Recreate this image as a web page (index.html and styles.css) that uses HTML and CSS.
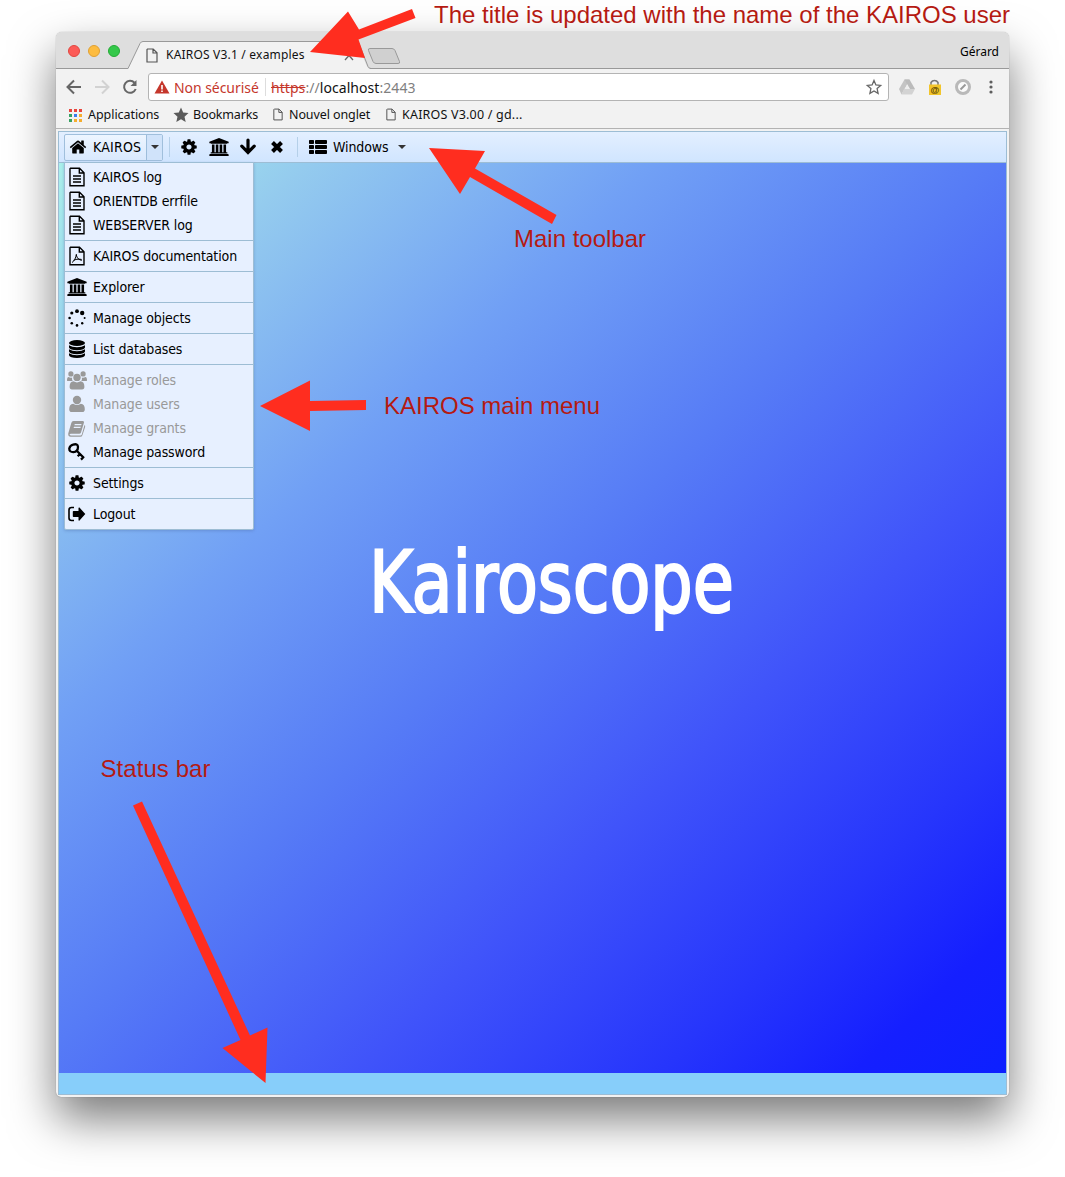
FILE: index.html
```html
<!DOCTYPE html>
<html lang="en">
<head>
<meta charset="utf-8">
<title>KAIROS V3.1 / examples</title>
<link rel="stylesheet" href="styles.css">
</head>
<body>
<svg class="defs" width="0" height="0">
  <defs>
    <symbol id="home" viewBox="0 0 1792 1792"><path d="M1472 992v480q0 26-19 45t-45 19h-384v-384h-256v384h-384q-26 0-45-19t-19-45v-480q0-1 .5-3t.5-3l575-474 575 474q1 2 1 6zm223-69l-62 74q-8 9-21 11h-3q-13 0-21-7l-692-577-692 577q-12 8-24 7-13-2-21-11l-62-74q-8-10-7-23.5t11-21.5l719-599q32-26 76-26t76 26l244 204v-195q0-14 9-23t23-9h192q14 0 23 9t9 23v408l219 182q10 8 11 21.5t-7 23.5z"/></symbol>
    <symbol id="cog" viewBox="0 0 1792 1792"><path d="M1152 896q0-106-75-181t-181-75-181 75-75 181 75 181 181 75 181-75 75-181zm512-109v222q0 12-8 23t-20 13l-185 28q-19 54-39 91 35 50 107 138 10 12 10 25t-9 23q-27 37-99 108t-94 71q-12 0-26-9l-138-108q-44 23-91 38-16 136-29 186-7 28-36 28h-222q-14 0-24.500-8.500t-11.500-21.500l-28-184q-49-16-90-37l-141 107q-10 9-25 9-14 0-25-11-126-114-165-168-7-10-7-23 0-12 8-23 15-21 51-66.500t54-70.500q-27-50-41-99l-183-27q-13-2-21-12.500t-8-23.500v-222q0-12 8-23t19-13l186-28q14-46 39-92-40-57-107-138-10-12-10-24 0-10 9-23 26-36 98.500-107.500t94.500-71.500q13 0 26 10l138 107q44-23 91-38 16-136 29-186 7-28 36-28h222q14 0 24.500 8.500t11.500 21.500l28 184q49 16 90 37l142-107q9-9 24-9 13 0 25 10 129 119 165 170 7 8 7 22 0 12-8 23-15 21-51 66.500t-54 70.500q26 50 41 98l183 28q13 2 21 12.500t8 23.500z"/></symbol>
    <symbol id="bank" viewBox="0 0 1920 1792"><path d="M960 0l960 384v128h-128q0 26-20.500 45t-48.500 19h-1526q-28 0-48.500-19t-20.500-45h-128v-128zm-704 640h256v768h128v-768h256v768h128v-768h256v768h128v-768h256v768h59q28 0 48.500 19t20.500 45v64h-1664v-64q0-26 20.500-45t48.500-19h59v-768zm1595 960q28 0 48.500 19t20.500 45v128h-1920v-128q0-26 20.500-45t48.500-19h1782z"/></symbol>
    <symbol id="down" viewBox="0 0 18 18"><path d="M9 2v12M2.800 8.200L9 14.400l6.200-6.200" fill="none" stroke="currentColor" stroke-width="3.200" stroke-linecap="round"/></symbol>
    <symbol id="times" viewBox="0 0 18 18"><path d="M4.500 4.500l9 9M13.500 4.500l-9 9" fill="none" stroke="currentColor" stroke-width="4"/></symbol>
    <symbol id="list" viewBox="0 0 18 14"><path d="M.8 0h3.400q.8 0 .8.800v2.400q0 .8-.8.800H.8Q0 4 0 3.200V.8Q0 0 .8 0zM7 0h10q1 0 1 .8v2.400q0 .8-1 .8H7q-1 0-1-.8V.8Q6 0 7 0zM.8 5h3.400q.8 0 .8.800v2.400q0 .8-.8.800H.8Q0 9 0 8.200V5.800Q0 5 .8 5zM7 5h10q1 0 1 .8v2.400q0 .8-1 .8H7q-1 0-1-.8V5.800Q6 5 7 5zM.8 10h3.400q.8 0 .8.800v2.400q0 .8-.8.800H.8q-.8 0-.8-.8v-2.400q0-.8.8-.8zM7 10h10q1 0 1 .8v2.400q0 .8-1 .8H7q-1 0-1-.8v-2.400q0-.8 1-.8z"/></symbol>
    <symbol id="doc" viewBox="0 0 18 20"><path d="M2.500 1.200h9L16 5.700v13H2V1.700zM11.300 1.500V6H16M5 9h8M5 12h8M5 15h8" fill="none" stroke="currentColor" stroke-width="1.400"/></symbol>
    <symbol id="pdf" viewBox="0 0 18 20"><path d="M2.500 1.200h9L16 5.700v13H2V1.700zM11.300 1.500V6H16" fill="none" stroke="currentColor" stroke-width="1.400"/><path d="M4 16.500c2-1 4-4.500 4.400-8.500M8.300 9c.7 3.200 3 5.400 5.700 5.200M5.500 14.300c2-.9 4.500-1.500 8-.9" fill="none" stroke="currentColor" stroke-width="1"/></symbol>
    <symbol id="dots" viewBox="0 0 18 18"><circle cx="9" cy="2.200" r="1.900"/><circle cx="14.200" cy="4" r="2.200"/><circle cx="3.800" cy="4" r="1.600"/><circle cx="1.600" cy="9" r="1.300"/><circle cx="16.600" cy="9" r="1"/><circle cx="3.800" cy="14.200" r="1.300"/><circle cx="9" cy="16.400" r="1.300"/><circle cx="14.200" cy="14.200" r="1.200"/></symbol>
    <symbol id="db" viewBox="0 0 16 18"><ellipse cx="8" cy="3" rx="8" ry="3"/><path d="M0 5.200q3 2 8 2t8-2V7.500q-1 2.700-8 2.700T0 7.500zM0 9.200q3 2 8 2t8-2v2.300q-1 2.700-8 2.700t-8-2.700zM0 13.200q3 2 8 2t8-2v2.100Q15 18 8 18t-8-2.700z"/></symbol>
    <symbol id="users" viewBox="0 0 20 19"><circle cx="3.900" cy="2.900" r="2.600"/><circle cx="16.100" cy="2.900" r="2.600"/><path d="M0 9.200Q0 6 1.500 5.900q2 1.300 3.600.5-.4 2.100.6 3.500H2Q0 10.500 0 9.200zM20 9.200Q20 6 18.500 5.900q-2 1.300-3.600.5.400 2.100-.6 3.500H18q2 .6 2-.7z"/><circle cx="10" cy="6.400" r="3.700"/><path d="M6.500 10.300q3.500 2.300 7 0 3.900.2 3.900 5.500 0 2.700-2.400 2.700H5q-2.400 0-2.400-2.700 0-5.300 3.900-5.500z"/></symbol>
    <symbol id="user" viewBox="0 0 18 18"><circle cx="9" cy="5" r="4.200"/><path d="M5.200 8.700q3.800 2.700 7.600 0 4 .3 4 5.500 0 2.800-2.500 2.800H3.700q-2.500 0-2.500-2.800 0-5.200 4-5.500z"/></symbol>
    <symbol id="book" viewBox="0 0 18 17"><path d="M5.500 1h9.300q1.600 0 1.200 1.600l-3 9.800q-.4 1.400-1.800 1.400H3q-1.500 0-1.400.8.100.8 1.200.8h9.700q1 0 1.300-1l2.700-9.300q1 .6.600 2l-2.700 8.200q-.4 1.500-2.200 1.500H2.600Q.2 16.800.2 14q0-.8.400-1.800L3.300 3Q3.800 1 5.500 1zM6.800 4l-.4 1.200h6.800l.4-1.200zM6 6.700l-.4 1.200h6.800l.4-1.200z" fill-rule="evenodd"/></symbol>
    <symbol id="key" viewBox="0 0 18 18"><path d="M5 1.700q4.800-1.600 5 2.300-.1 4.800-4.600 5.100Q1.200 9.200 1.300 5.500 2 2.500 5 1.700zM8.500 7.500l7.500 7.500M12 11l-2.300 2.300M15.300 14.300L13 16.600" fill="none" stroke="currentColor" stroke-width="2.300"/></symbol>
    <symbol id="logout" viewBox="0 0 18 16"><path d="M6 1.500H3.500Q1 1.500 1 4v8q0 2.500 2.500 2.500H6" fill="none" stroke="currentColor" stroke-width="1.600"/><path d="M5.500 5h5V2q.2-1 1-.4L17.300 8l-5.800 6.400q-.8.600-1-.4v-3h-5q-.7 0-.7-.7V5.700q0-.7.700-.7z"/></symbol>
    <symbol id="page" viewBox="0 0 12 15"><path d="M1.500 1h5.700L11 4.800V14H1V1.500zM7 1v4h4" fill="none" stroke="currentColor" stroke-width="1.200"/></symbol>
  </defs>
</svg>

<div class="window">
  <header class="tabstrip">
    <div class="lights"><i class="red"></i><i class="amber"></i><i class="green"></i></div>
    <svg class="tabshape" width="276" height="37"><path d="M0 36.500L12 11.500q1-2 3-2H226q2 0 3 2l10 23q1 2 3 2V37H0z" fill="#f2f2f2"/><path d="M0 36.500L12 11.500q1-2 3-2H228q2 0 3 2l9 23q1 2 3 2h33" fill="none" stroke="#999"/><path d="M242 16.500h22q2 0 3 2l4.500 11q.8 2-1.500 2h-22q-2 0-3-2l-4.500-11q-.8-2 1.500-2z" fill="#d0d0d0" stroke="#999"/><path d="M217 19l8 9m0-9l-8 9" stroke="#666" stroke-width="1.300"/></svg>
    <div class="tabtitle"><svg width="12" height="15"><use href="#page"/></svg><span>KAIROS V3.1 / examples</span></div>
    <span class="profile">Gérard</span>
  </header>
  <div class="navbar">
    <svg class="nav" width="84" height="20" fill="none" stroke="#666" stroke-width="2"><path d="M17 10H4m6-6.500L3.500 10l6.500 6.500"/><path d="M31 10h13m-6-6.500l6.500 6.500-6.500 6.500" stroke="#d2d2d2"/><path d="M70.500 5.700A6 6 0 1 0 71.700 12"/><path d="M72.500 3v6h-6z" fill="#666" stroke="none"/></svg>
    <div class="address">
      <svg width="16" height="14"><path d="M8 .5L15.500 13.500H.5z" fill="#c5372c"/><path d="M8 5v4.500M8 10.500v1.500" stroke="#fff" stroke-width="1.600"/></svg>
      <span class="warn">Non sécurisé</span><i class="bar"></i>
      <span class="url"><s>https</s><span>://</span><b>localhost</b><span>:2443</span></span>
      <svg class="star" width="16" height="16"><path d="M8 1.500l1.900 4.400 4.800.5-3.600 3.200 1 4.800L8 12l-4.100 2.400 1-4.800L1.300 6.400l4.800-.5z" fill="none" stroke="#666" stroke-width="1.300"/></svg>
    </div>
    <svg class="ext" width="112" height="20"><path d="M14.500 2.500h-5L4 12l2.500 5.500 5-9z" fill="#c4c4c4"/><path d="M9.500 2.500h5L20 12h-5z" fill="#bbb"/><path d="M9 12h11l-3 5.500H6.500z" fill="#d3d3d3"/><path d="M12 8l2.300 4H9.700z" fill="#eee"/>
      <path d="M36 9V5.500a4 3.800 0 0 1 7 0V9" fill="none" stroke="#777" stroke-width="1.500"/><path d="M34 7.500h12V18H34z" fill="#f2c52b"/><text x="40" y="16" text-anchor="middle" class="at">@</text>
      <circle cx="68" cy="10" r="6.500" fill="#fafafa" stroke="#b9b9b9" stroke-width="3"/><path d="M65.500 12.500l5-5" stroke="#999" stroke-width="2"/><g fill="#5e5e5e"><circle cx="96" cy="5" r="1.600"/><circle cx="96" cy="10" r="1.600"/><circle cx="96" cy="15" r="1.600"/></g></svg>
  </div>
  <div class="bookmarks">
    <svg width="14" height="14"><g fill="#e8453c"><path d="M1 1h3v3H1zM6 1h3v3H6zM11 1h3v3h-3z"/></g><path d="M1 6h3v3H1zM1 11h3v3H1z" fill="#36a162"/><path d="M6 6h3v3H6z" fill="#3b7ded"/><path d="M11 6h3v3h-3zM6 11h3v3H6zM11 11h3v3h-3z" fill="#f5ad2d"/></svg><span class="bk1">Applications</span>
    <svg width="16" height="16"><path d="M8 .5l2.200 5 5.300.6-4 3.600 1.200 5.300L8 12.300 3.300 15l1.200-5.300-4-3.600 5.300-.6z" fill="#5a5a5a"/></svg><span class="bk2">Bookmarks</span>
    <svg class="pg" width="10" height="13"><use href="#page"/></svg><span class="bk3">Nouvel onglet</span>
    <svg class="pg" width="10" height="13"><use href="#page"/></svg><span class="bk4">KAIROS V3.00 / gd...</span>
  </div>
  <main class="app">
    <div class="toolbar">
      <div class="split"><svg width="18" height="18"><use href="#home"/></svg><span>KAIROS</span><i><b class="caret"></b></i></div>
      <i class="divider"></i>
      <svg class="t1" width="18" height="18"><use href="#cog"/></svg>
      <svg class="t2" width="20" height="18"><use href="#bank"/></svg>
      <svg class="t3" width="18" height="18"><use href="#down"/></svg>
      <svg class="t4" width="18" height="18"><use href="#times"/></svg>
      <i class="divider d2"></i>
      <svg class="t5" width="18" height="14"><use href="#list"/></svg><span class="win">Windows</span><b class="caret"></b>
    </div>
    <div class="desktop">
      <svg class="brand" width="380" height="120"><text x="1" y="74" textLength="365" lengthAdjust="spacingAndGlyphs">Kairoscope</text></svg>
    </div>
    <footer class="status"></footer>
    <nav class="menu">
      <div class="group"><a><svg width="18" height="20"><use href="#doc"/></svg>KAIROS log</a><a><svg width="18" height="20"><use href="#doc"/></svg>ORIENTDB errfile</a><a><svg width="18" height="20"><use href="#doc"/></svg>WEBSERVER log</a></div>
      <div class="group"><a><svg width="18" height="20"><use href="#pdf"/></svg>KAIROS documentation</a></div>
      <div class="group"><a><svg width="20" height="18"><use href="#bank"/></svg>Explorer</a></div>
      <div class="group"><a><svg width="18" height="18"><use href="#dots"/></svg>Manage objects</a></div>
      <div class="group"><a><svg width="16" height="18"><use href="#db"/></svg>List databases</a></div>
      <div class="group"><a class="off"><svg width="20" height="19"><use href="#users"/></svg>Manage roles</a><a class="off"><svg width="18" height="18"><use href="#user"/></svg>Manage users</a><a class="off"><svg width="18" height="17"><use href="#book"/></svg>Manage grants</a><a><svg width="18" height="18"><use href="#key"/></svg>Manage password</a></div>
      <div class="group"><a><svg width="18" height="18"><use href="#cog"/></svg>Settings</a></div>
      <div class="group"><a><svg width="18" height="16"><use href="#logout"/></svg>Logout</a></div>
    </nav>
  </main>
</div>

<svg class="notes" width="1065" height="1177">
  <g fill="#ff2d1f">
    <path d="M310 52L348 11.500 359 29.500 412 9 415.500 18 358.500 39.500 365 58z"/>
    <path d="M429 148L485 151 475 168.500 556.500 215 552 224 470 177 460 194z"/>
    <path d="M260 406L310 380.500V401L366 400V410L310 411V431z"/>
    <path d="M133 805.500L142 801.500 250 1035.500 267.500 1027.500 265.500 1083 222.500 1048 240.500 1040z"/>
  </g>
  <g class="labels">
    <text x="434" y="23" textLength="576">The title is updated with the name of the KAIROS user</text>
    <text x="514" y="247" textLength="132">Main toolbar</text>
    <text x="384" y="414" textLength="216">KAIROS main menu</text>
    <text x="100.500" y="777" textLength="110">Status bar</text>
  </g>
</svg>
</body>
</html>
```
FILE: styles.css
```css
* { box-sizing: border-box; }
body { margin: 0; height: 1177px; background: #fff; overflow: hidden; position: relative; padding: 32px 0 0 56px; font-family: "Noto Sans", sans-serif; }
svg { display: block; flex: none; overflow: visible; }
.defs { position: absolute; }
.window { width: 953px; height: 1065px; display: flex; flex-direction: column; background: #f2f2f2; border-radius: 6px 6px 5px 5px; box-shadow: 0 0 1px 0 rgba(0,0,0,.45), 0 22px 46px rgba(0,0,0,.52); }
.tabstrip { height: 37px; flex: none; background: #dedede; border-radius: 6px 6px 0 0; border-bottom: 1px solid #999; position: relative; display: flex; align-items: center; padding-right: 10px; }
.lights { display: flex; gap: 8px; padding-left: 12px; margin-top: 2px; }
.lights i { width: 12px; height: 12px; border-radius: 50%; border: 1px solid; }
.red { background: #fc5b57; border-color: #e2463f !important; }
.amber { background: #fdbc40; border-color: #e0a033 !important; }
.green { background: #34c84a; border-color: #24ab35 !important; }
.tabshape { position: absolute; left: 72px; top: 0; }
.tabtitle { position: absolute; left: 90px; top: 15px; display: flex; align-items: center; gap: 8px; color: #555; font-size: 12px; line-height: 16px; white-space: nowrap; }
.tabtitle span { color: #111; letter-spacing: .2px; }
.profile { margin-left: auto; font-size: 12px; margin-top: 3px; }
.navbar { height: 36px; flex: none; display: flex; align-items: center; padding-left: 8px; }
.address { flex: none; width: 741px; height: 28px; background: #fff; border: 1px solid #b4b4b4; border-radius: 3px; display: flex; align-items: center; padding: 0 6px 0 5px; font-size: 14px; }
.warn { color: #c5372c; margin-left: 4px; width: 85px; white-space: nowrap; letter-spacing: -.05px; }
.bar { width: 1px; height: 18px; background: #ddd; margin: 0 5px 0 6px; }
.url { color: #808080; letter-spacing: .06px; }
.url s { color: #c5372c; }
.url b { color: #111; font-weight: 400; }
.star { margin-left: auto; }
.ext { margin-left: 6px; }
.at { font: bold 9px "Liberation Sans", sans-serif; fill: #554000; }
.bookmarks { height: 24px; flex: none; border-bottom: 1px solid #b3b3b3; display: flex; align-items: center; padding: 0 0 4px 12px; font-size: 12.500px; color: #111; white-space: nowrap; }
.bookmarks span { margin-left: 6px; letter-spacing: -.05px; flex: none; }
.bookmarks .bk1 { width: 85px; }
.bookmarks .bk2 { width: 79px; margin-left: 4px; letter-spacing: -.15px; }
.bookmarks .bk3 { width: 96px; letter-spacing: -.1px; }
.bookmarks .bk4 { letter-spacing: .2px; }
.pg { color: #555; margin-left: 1px; }
.app { margin: 2px 2px 0; height: 964px; border: 1px solid #9dbdd4; position: relative; display: flex; flex-direction: column; font: 14px "DejaVu Sans Condensed", "DejaVu Sans", sans-serif; font-stretch: condensed; letter-spacing: -.12px; }
.toolbar { height: 31px; flex: none; background: linear-gradient(#e3efff, #d0e5ff); border-bottom: 1px solid #9dbdd4; display: flex; align-items: center; padding-left: 5px; }
.split { width: 99px; height: 27px; border: 1px solid #a0bfdc; border-radius: 2px; display: flex; align-items: center; background: linear-gradient(#edf5ff, #d9e9fd); padding-left: 4px; }
.split span { margin-left: 6px; width: 53px; letter-spacing: .2px; }
.split > i { width: 16px; height: 25px; border-left: 1px solid #9dbddb; background: #d0e3fa; display: flex; align-items: center; justify-content: center; }
.caret { border: 4px solid transparent; border-top-color: #333; border-bottom: 0; }
.divider { width: 1px; height: 20px; background: #b5d0e9; margin-left: 6px; }
.t1 { margin-left: 10px; }
.t2 { margin-left: 11px; }
.t3 { margin-left: 10px; }
.t4 { margin-left: 11px; }
.d2 { margin-left: 11px; }
.t5 { margin-left: 11px; }
.win { margin-left: 6px; width: 65px; }
.desktop { flex: 1; background: linear-gradient(137deg, #aaf0eb 0%, #94cbee 13%, #71a0f5 31%, #567bf6 49%, #4054fa 66%, #2635fc 82%, #151fff 92%, #0c20ff 100%); padding: 375px 0 0 309px; }
.brand text { font: 85px "DejaVu Sans Condensed", "DejaVu Sans", sans-serif; fill: #fff; stroke: #fff; stroke-width: 2.2px; letter-spacing: 0; }
.status { height: 21px; background: #87cefa; flex: none; }
.menu { position: absolute; left: 5px; top: 30px; width: 190px; border: 1px solid #9dbdd4; background: #e7f0ff; border-radius: 0 0 2px 2px; box-shadow: 0 1px 3px rgba(80,110,170,.4); }
.group { padding: 3px 0; border-bottom: 1px solid #9dbdd4; }
.group:first-child { padding-top: 2px; }
.group:last-child { border: 0; }
.menu a { height: 24px; display: grid; grid-template-columns: 24px 1fr; align-items: center; padding-left: 2px; column-gap: 2px; color: #000; white-space: nowrap; }
.menu a svg { justify-self: center; margin-right: 4px; }
.menu a.off { color: #999; }
.menu svg, .toolbar svg { fill: currentColor; }
.notes { position: absolute; left: 0; top: 0; pointer-events: none; }
.labels { font: 24px "Liberation Sans", sans-serif; fill: #b51a12; }
```
